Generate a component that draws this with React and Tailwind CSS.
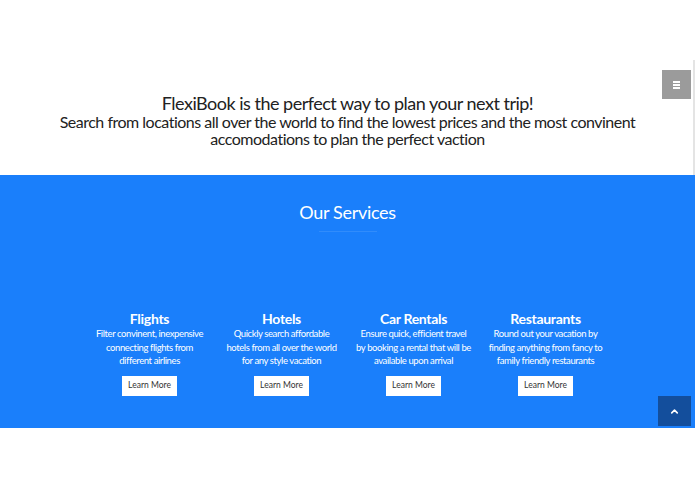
import { ChevronUp } from 'lucide-react';

const services = [
  {
    title: 'Flights',
    text: 'Filter convinent, inexpensive connecting flights from different airlines',
  },
  {
    title: 'Hotels',
    text: 'Quickly search affordable hotels from all over the world for any style vacation',
  },
  {
    title: 'Car Rentals',
    text: 'Ensure quick, efficient travel by booking a rental that will be available upon arrival',
  },
  {
    title: 'Restaurants',
    text: 'Round out your vacation by finding anything from fancy to family friendly restaurants',
  },
];

const App = () => {
  return (
    <div
      className="relative w-[695px] h-[494px] bg-white overflow-hidden"
      style={{ fontFamily: 'Lato, "Open Sans", sans-serif' }}
    >
      {/* Menu toggle */}
      <button className="absolute top-[70px] right-[4px] w-[29px] h-[29px] bg-[#9b9b9b] flex items-center justify-center">
        <span className="flex flex-col gap-[1px]">
          <span className="block w-[7px] h-[2px] bg-white" />
          <span className="block w-[7px] h-[2px] bg-white" />
          <span className="block w-[7px] h-[2px] bg-white" />
        </span>
      </button>
      <div className="absolute top-[60px] right-0 w-[2px] h-[115px] bg-[#e4e4e4]" />

      {/* Intro */}
      <section className="h-[175px] pt-[93px] text-center text-[#222]">
        <h1 className="text-[18px] leading-[20px] tracking-[-0.5px]">
          FlexiBook is the perfect way to plan your next trip!
        </h1>
        <p className="text-[16px] leading-[17px] tracking-[-0.5px] mx-auto w-[600px]">
          Search from locations all over the world to find the lowest prices and the most convinent accomodations to
          plan the perfect vaction
        </p>
      </section>

      {/* Services */}
      <section className="h-[253px] bg-[#1a7ffb] text-white text-center">
        <div className="pt-[24px]">
          <h2 className="text-[18px] leading-[26px] tracking-[-0.3px]">Our Services</h2>
          <div className="mx-auto mt-[6px] w-[58px] h-px bg-white/10" />
        </div>

        <div className="mx-auto mt-[78px] w-[528px] grid grid-cols-4">
          {services.map((s) => (
            <div key={s.title} className="flex flex-col items-center px-[8px]">
              <h3 className="text-[14px] leading-[17px] font-bold tracking-[-0.3px]">{s.title}</h3>
              <p className="text-[9.5px] leading-[13.5px] tracking-[-0.4px]">{s.text}</p>
              <button className="mt-[8px] w-[55px] h-[20px] bg-white text-[#333] text-[8.5px]">Learn More</button>
            </div>
          ))}
        </div>
      </section>

      {/* Back to top */}
      <button className="absolute top-[396px] right-[4px] w-[33px] h-[30px] bg-[#134e9c] flex items-center justify-center text-white">
        <ChevronUp size={11} strokeWidth={3.5} />
      </button>
    </div>
  );
};

export default App;
